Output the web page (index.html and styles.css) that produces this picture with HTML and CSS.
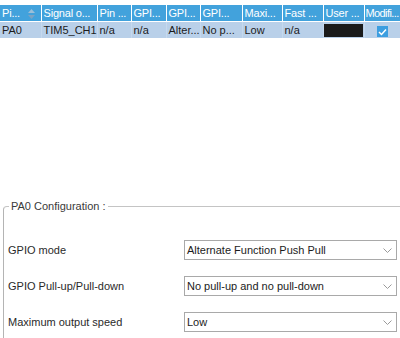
FILE: index.html
```html
<!DOCTYPE html>
<html lang="en">
<head>
  <meta charset="UTF-8">
  <title>Pin Configuration</title>
  <link rel="stylesheet" href="styles.css">
</head>
<body>
  <table class="pins">
    <colgroup>
      <col style="width:41px"><col style="width:56px"><col style="width:34px"><col style="width:35px"><col style="width:34px">
      <col style="width:42px"><col style="width:40px"><col style="width:41px"><col style="width:41px"><col style="width:36px">
    </colgroup>
    <thead>
      <tr>
        <th class="sortable">Pi...
          <svg class="sort" width="7" height="10" viewBox="0 0 7 10"><path d="M3.5 0L7 4H0z" fill="#9cbfd9"/><path d="M0 6h7L3.5 10z" fill="#7ba3c4"/></svg>
        </th>
        <th>Signal o...</th>
        <th>Pin ...</th>
        <th>GPI...</th>
        <th>GPI...</th>
        <th>GPI...</th>
        <th>Maxi...</th>
        <th>Fast ...</th>
        <th>User ...</th>
        <th class="last">Modifi...</th>
      </tr>
    </thead>
    <tbody>
      <tr>
        <td>PA0</td>
        <td>TIM5_CH1</td>
        <td>n/a</td>
        <td>n/a</td>
        <td>Alter...</td>
        <td>No p...</td>
        <td>Low</td>
        <td>n/a</td>
        <td class="user"><span class="label-box"></span></td>
        <td class="check-cell">
          <span class="check"><svg width="9" height="8" viewBox="0 0 9 8"><path d="M1 4l2.5 2.5L8 1.5" fill="none" stroke="#fff" stroke-width="1.5"/></svg></span>
        </td>
      </tr>
    </tbody>
  </table>

  <fieldset class="config">
    <legend>PA0 Configuration :</legend>
    <div class="row">
      <span class="name">GPIO mode</span>
      <div class="dropdown">Alternate Function Push Pull<svg width="9" height="5" viewBox="0 0 9 5"><path d="M0.5 0.5l4 4 4-4" fill="none" stroke="#9a9a9a"/></svg></div>
    </div>
    <div class="row">
      <span class="name">GPIO Pull-up/Pull-down</span>
      <div class="dropdown">No pull-up and no pull-down<svg width="9" height="5" viewBox="0 0 9 5"><path d="M0.5 0.5l4 4 4-4" fill="none" stroke="#9a9a9a"/></svg></div>
    </div>
    <div class="row">
      <span class="name">Maximum output speed</span>
      <div class="dropdown">Low<svg width="9" height="5" viewBox="0 0 9 5"><path d="M0.5 0.5l4 4 4-4" fill="none" stroke="#9a9a9a"/></svg></div>
    </div>
  </fieldset>
</body>
</html>
```

FILE: styles.css
```css
body {
  margin: 0;
  width: 400px;
  height: 338px;
  overflow: hidden;
  background-color: #ffffff;
  font-family: "Liberation Sans", Arial, sans-serif;
  font-size: 11px;
  color: #1c1c1c;
}
.pins {
  margin-top: 5px;
  width: 400px;
  table-layout: fixed;
  border-collapse: collapse;
  font-size: 11px;
}
.pins th,
.pins td {
  padding: 0 0 0 2px;
  white-space: nowrap;
  overflow: hidden;
  text-align: left;
  font-weight: normal;
}
.pins th {
  height: 16px;
  background-color: #42a2dc;
  color: #ffffff;
  letter-spacing: -0.2px;
  border-right: 1px solid #ffffff;
  border-bottom: 1px solid #ffffff;
}
.pins th.last {
  padding-left: 1px;
  letter-spacing: -0.6px;
  border-right: none;
}
.pins th.sortable {
  position: relative;
}
.sort {
  position: absolute;
  left: 28px;
  top: 4px;
}
.pins td {
  height: 16px;
  background-color: #b9d0e9;
  border-right: 1px solid #c6d9ee;
}
.pins td.user {
  padding: 0 1px 0 0;
}
.label-box {
  display: block;
  height: 13px;
  background-color: #1b1b1b;
}
.pins td.check-cell {
  text-align: center;
  padding: 0;
}
.check {
  display: inline-flex;
  align-items: center;
  justify-content: center;
  width: 11px;
  height: 11px;
  margin-top: 3px;
  background-color: #3c9ee0;
  vertical-align: top;
}
.config {
  margin: 161px 0 0 3px;
  padding: 19px 0 0 4px;
  border: none;
  border-top: 1px solid #c4c4c4;
  border-left: 1px solid #b4b4b4;
  border-top-left-radius: 4px;
  min-width: 0;
}
.config legend {
  margin-left: 1px;
  padding: 0 2px;
  color: #3a3a3a;
  line-height: 14px;
}
.row {
  display: flex;
  align-items: center;
  height: 36px;
}
.name {
  width: 176px;
  color: #2a2a2a;
}
.dropdown {
  box-sizing: border-box;
  width: 213px;
  height: 20px;
  display: flex;
  align-items: center;
  justify-content: space-between;
  padding: 0 4px 0 2px;
  border: 1px solid #a9a9a9;
  background-color: #ffffff;
  color: #1c1c1c;
}
```
